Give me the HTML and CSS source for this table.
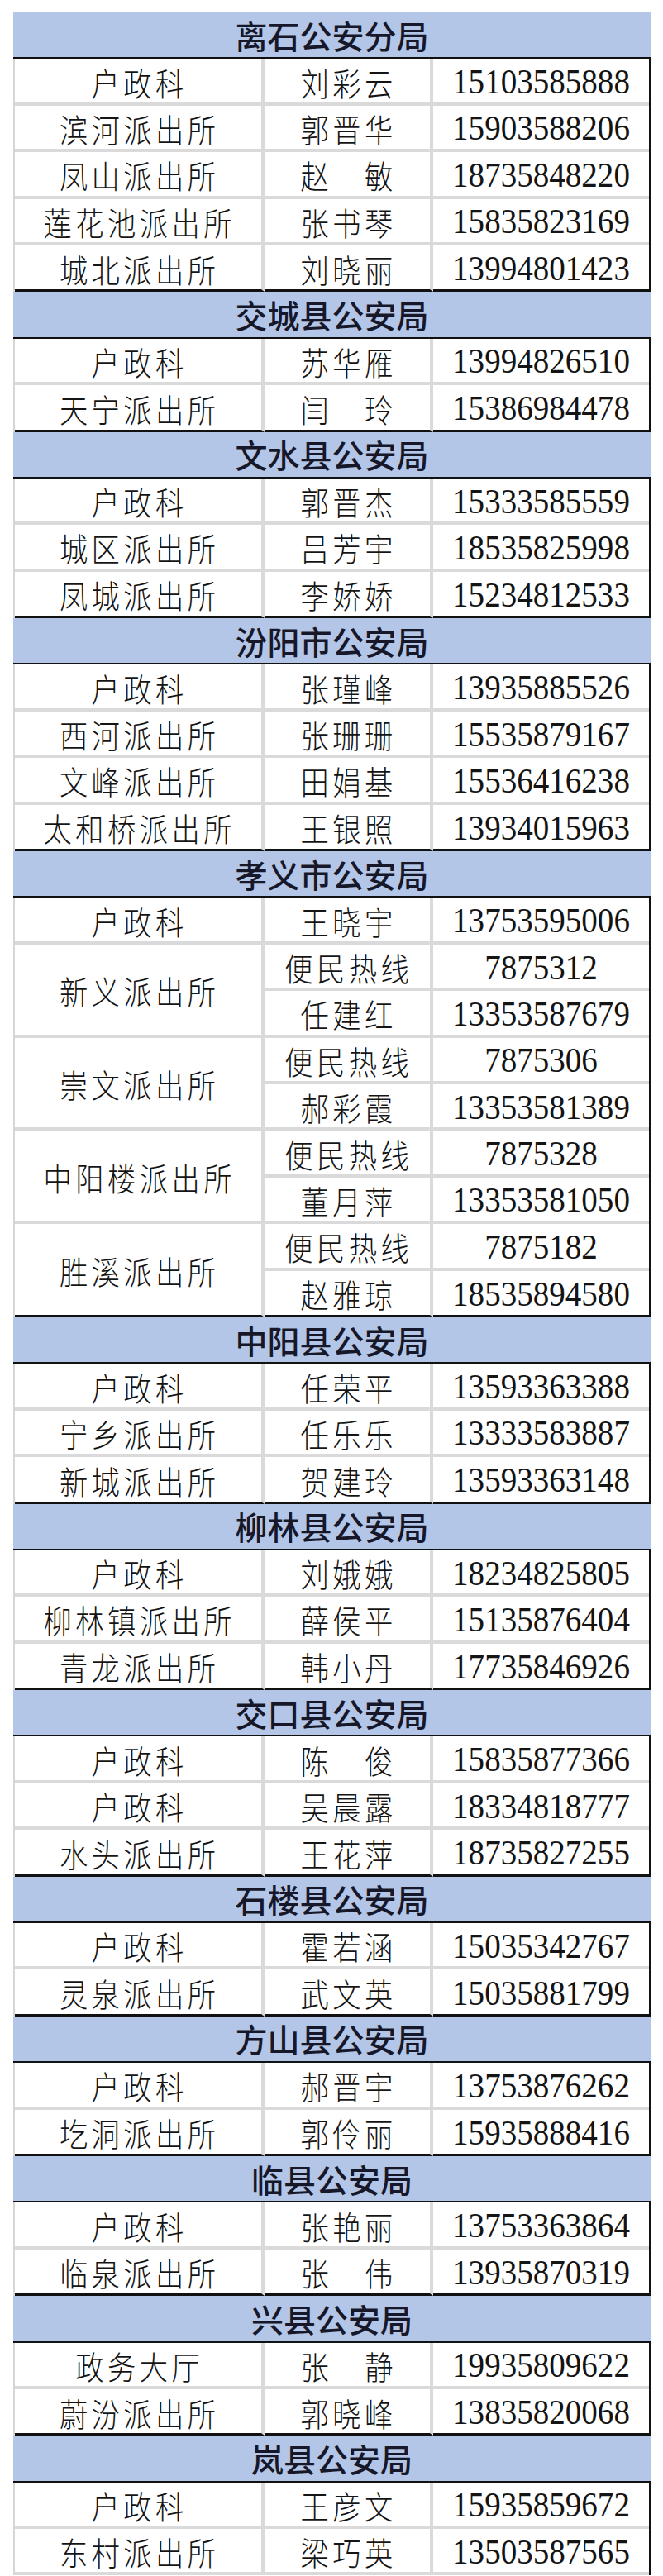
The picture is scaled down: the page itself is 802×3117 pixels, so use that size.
FILE: index.html
```html
<!DOCTYPE html>
<html lang="zh-CN">
<head>
<meta charset="utf-8">
<title>吕梁市公安局户政联系表</title>
<link rel="stylesheet" href="styles.css">
</head>
<body>
<div class="page">

<section class="sec">
  <div class="head">离石公安分局</div>
  <div class="grid">
    <div class="c c1"><span class="zh">户政科</span></div><div class="c c2"><span class="zh">刘彩云</span></div><div class="c c3"><span class="num">15103585888</span></div>
    <div class="c c1"><span class="zh">滨河派出所</span></div><div class="c c2"><span class="zh">郭晋华</span></div><div class="c c3"><span class="num">15903588206</span></div>
    <div class="c c1"><span class="zh">凤山派出所</span></div><div class="c c2"><span class="zh">赵　敏</span></div><div class="c c3"><span class="num">18735848220</span></div>
    <div class="c c1"><span class="zh">莲花池派出所</span></div><div class="c c2"><span class="zh">张书琴</span></div><div class="c c3"><span class="num">15835823169</span></div>
    <div class="c c1 end"><span class="zh">城北派出所</span></div><div class="c c2 end"><span class="zh">刘晓丽</span></div><div class="c c3 end"><span class="num">13994801423</span></div>
  </div>
</section>

<section class="sec">
  <div class="head">交城县公安局</div>
  <div class="grid">
    <div class="c c1"><span class="zh">户政科</span></div><div class="c c2"><span class="zh">苏华雁</span></div><div class="c c3"><span class="num">13994826510</span></div>
    <div class="c c1 end"><span class="zh">天宁派出所</span></div><div class="c c2 end"><span class="zh">闫　玲</span></div><div class="c c3 end"><span class="num">15386984478</span></div>
  </div>
</section>

<section class="sec">
  <div class="head">文水县公安局</div>
  <div class="grid">
    <div class="c c1"><span class="zh">户政科</span></div><div class="c c2"><span class="zh">郭晋杰</span></div><div class="c c3"><span class="num">15333585559</span></div>
    <div class="c c1"><span class="zh">城区派出所</span></div><div class="c c2"><span class="zh">吕芳宇</span></div><div class="c c3"><span class="num">18535825998</span></div>
    <div class="c c1 end"><span class="zh">凤城派出所</span></div><div class="c c2 end"><span class="zh">李娇娇</span></div><div class="c c3 end"><span class="num">15234812533</span></div>
  </div>
</section>

<section class="sec">
  <div class="head">汾阳市公安局</div>
  <div class="grid">
    <div class="c c1"><span class="zh">户政科</span></div><div class="c c2"><span class="zh">张瑾峰</span></div><div class="c c3"><span class="num">13935885526</span></div>
    <div class="c c1"><span class="zh">西河派出所</span></div><div class="c c2"><span class="zh">张珊珊</span></div><div class="c c3"><span class="num">15535879167</span></div>
    <div class="c c1"><span class="zh">文峰派出所</span></div><div class="c c2"><span class="zh">田娟基</span></div><div class="c c3"><span class="num">15536416238</span></div>
    <div class="c c1 end"><span class="zh">太和桥派出所</span></div><div class="c c2 end"><span class="zh">王银照</span></div><div class="c c3 end"><span class="num">13934015963</span></div>
  </div>
</section>

<section class="sec">
  <div class="head">孝义市公安局</div>
  <div class="grid">
    <div class="c c1"><span class="zh">户政科</span></div><div class="c c2"><span class="zh">王晓宇</span></div><div class="c c3"><span class="num">13753595006</span></div>
    <div class="c c1 span2"><span class="zh">新义派出所</span></div><div class="c c2"><span class="zh">便民热线</span></div><div class="c c3"><span class="num">7875312</span></div>
    <div class="c c2"><span class="zh">任建红</span></div><div class="c c3"><span class="num">13353587679</span></div>
    <div class="c c1 span2"><span class="zh">崇文派出所</span></div><div class="c c2"><span class="zh">便民热线</span></div><div class="c c3"><span class="num">7875306</span></div>
    <div class="c c2"><span class="zh">郝彩霞</span></div><div class="c c3"><span class="num">13353581389</span></div>
    <div class="c c1 span2"><span class="zh">中阳楼派出所</span></div><div class="c c2"><span class="zh">便民热线</span></div><div class="c c3"><span class="num">7875328</span></div>
    <div class="c c2"><span class="zh">董月萍</span></div><div class="c c3"><span class="num">13353581050</span></div>
    <div class="c c1 span2 end"><span class="zh">胜溪派出所</span></div><div class="c c2"><span class="zh">便民热线</span></div><div class="c c3"><span class="num">7875182</span></div>
    <div class="c c2 end"><span class="zh">赵雅琼</span></div><div class="c c3 end"><span class="num">18535894580</span></div>
  </div>
</section>

<section class="sec">
  <div class="head">中阳县公安局</div>
  <div class="grid">
    <div class="c c1"><span class="zh">户政科</span></div><div class="c c2"><span class="zh">任荣平</span></div><div class="c c3"><span class="num">13593363388</span></div>
    <div class="c c1"><span class="zh">宁乡派出所</span></div><div class="c c2"><span class="zh">任乐乐</span></div><div class="c c3"><span class="num">13333583887</span></div>
    <div class="c c1 end"><span class="zh">新城派出所</span></div><div class="c c2 end"><span class="zh">贺建玲</span></div><div class="c c3 end"><span class="num">13593363148</span></div>
  </div>
</section>

<section class="sec">
  <div class="head">柳林县公安局</div>
  <div class="grid">
    <div class="c c1"><span class="zh">户政科</span></div><div class="c c2"><span class="zh">刘娥娥</span></div><div class="c c3"><span class="num">18234825805</span></div>
    <div class="c c1"><span class="zh">柳林镇派出所</span></div><div class="c c2"><span class="zh">薛侯平</span></div><div class="c c3"><span class="num">15135876404</span></div>
    <div class="c c1 end"><span class="zh">青龙派出所</span></div><div class="c c2 end"><span class="zh">韩小丹</span></div><div class="c c3 end"><span class="num">17735846926</span></div>
  </div>
</section>

<section class="sec">
  <div class="head">交口县公安局</div>
  <div class="grid">
    <div class="c c1"><span class="zh">户政科</span></div><div class="c c2"><span class="zh">陈　俊</span></div><div class="c c3"><span class="num">15835877366</span></div>
    <div class="c c1"><span class="zh">户政科</span></div><div class="c c2"><span class="zh">吴晨露</span></div><div class="c c3"><span class="num">18334818777</span></div>
    <div class="c c1 end"><span class="zh">水头派出所</span></div><div class="c c2 end"><span class="zh">王花萍</span></div><div class="c c3 end"><span class="num">18735827255</span></div>
  </div>
</section>

<section class="sec">
  <div class="head">石楼县公安局</div>
  <div class="grid">
    <div class="c c1"><span class="zh">户政科</span></div><div class="c c2"><span class="zh">霍若涵</span></div><div class="c c3"><span class="num">15035342767</span></div>
    <div class="c c1 end"><span class="zh">灵泉派出所</span></div><div class="c c2 end"><span class="zh">武文英</span></div><div class="c c3 end"><span class="num">15035881799</span></div>
  </div>
</section>

<section class="sec">
  <div class="head">方山县公安局</div>
  <div class="grid">
    <div class="c c1"><span class="zh">户政科</span></div><div class="c c2"><span class="zh">郝晋宇</span></div><div class="c c3"><span class="num">13753876262</span></div>
    <div class="c c1 end"><span class="zh">圪洞派出所</span></div><div class="c c2 end"><span class="zh">郭伶丽</span></div><div class="c c3 end"><span class="num">15935888416</span></div>
  </div>
</section>

<section class="sec">
  <div class="head">临县公安局</div>
  <div class="grid">
    <div class="c c1"><span class="zh">户政科</span></div><div class="c c2"><span class="zh">张艳丽</span></div><div class="c c3"><span class="num">13753363864</span></div>
    <div class="c c1 end"><span class="zh">临泉派出所</span></div><div class="c c2 end"><span class="zh">张　伟</span></div><div class="c c3 end"><span class="num">13935870319</span></div>
  </div>
</section>

<section class="sec">
  <div class="head">兴县公安局</div>
  <div class="grid">
    <div class="c c1"><span class="zh">政务大厅</span></div><div class="c c2"><span class="zh">张　静</span></div><div class="c c3"><span class="num">19935809622</span></div>
    <div class="c c1 end"><span class="zh">蔚汾派出所</span></div><div class="c c2 end"><span class="zh">郭晓峰</span></div><div class="c c3 end"><span class="num">13835820068</span></div>
  </div>
</section>

<section class="sec">
  <div class="head">岚县公安局</div>
  <div class="grid">
    <div class="c c1"><span class="zh">户政科</span></div><div class="c c2"><span class="zh">王彦文</span></div><div class="c c3"><span class="num">15935859672</span></div>
    <div class="c c1"><span class="zh">东村派出所</span></div><div class="c c2"><span class="zh">梁巧英</span></div><div class="c c3"><span class="num">13503587565</span></div>
  </div>
</section>

</div>
</body>
</html>
```

FILE: styles.css
```css
html, body {
  margin: 0;
  padding: 0;
  background: #ffffff;
}

.page {
  width: 771px;
  padding: 15px 0 0 16px;
}

.head {
  height: 54.4px;
  background: #b4c6e7;
  border-bottom: 2px solid #111111;
  display: flex;
  align-items: center;
  justify-content: center;
  font-family: "Noto Sans CJK SC", "Noto Sans", sans-serif;
  font-weight: 500;
  font-size: 39px;
  line-height: 1;
  color: #16182a;
}

.grid {
  display: grid;
  grid-template-columns: 302px 204px 261px;
  grid-auto-rows: 56.4px;
  border-left: 2px solid #d6d6d6;
  border-right: 2px solid #111111;
}

.c {
  box-sizing: border-box;
  background: #ffffff;
  border-bottom: 4px solid #dadada;
  display: flex;
  align-items: center;
  justify-content: center;
  padding-top: 3px;
  overflow: hidden;
}

.c1, .c2 {
  border-right: 4px solid #dadada;
}

.span2 {
  grid-row: span 2;
}

.end {
  border-bottom: 3px solid #111111;
}

.zh {
  display: inline-block;
  font-family: "Noto Sans CJK SC", sans-serif;
  font-weight: 300;
  font-size: 39px;
  line-height: 1;
  letter-spacing: 5px;
  padding-left: 5px;
  transform: scaleX(0.88);
  color: #141414;
  white-space: nowrap;
}

.num {
  display: inline-block;
  font-family: "Liberation Serif", "Times New Roman", serif;
  font-size: 42px;
  line-height: 1;
  transform: scaleX(0.93);
  color: #141414;
  white-space: nowrap;
}
```
